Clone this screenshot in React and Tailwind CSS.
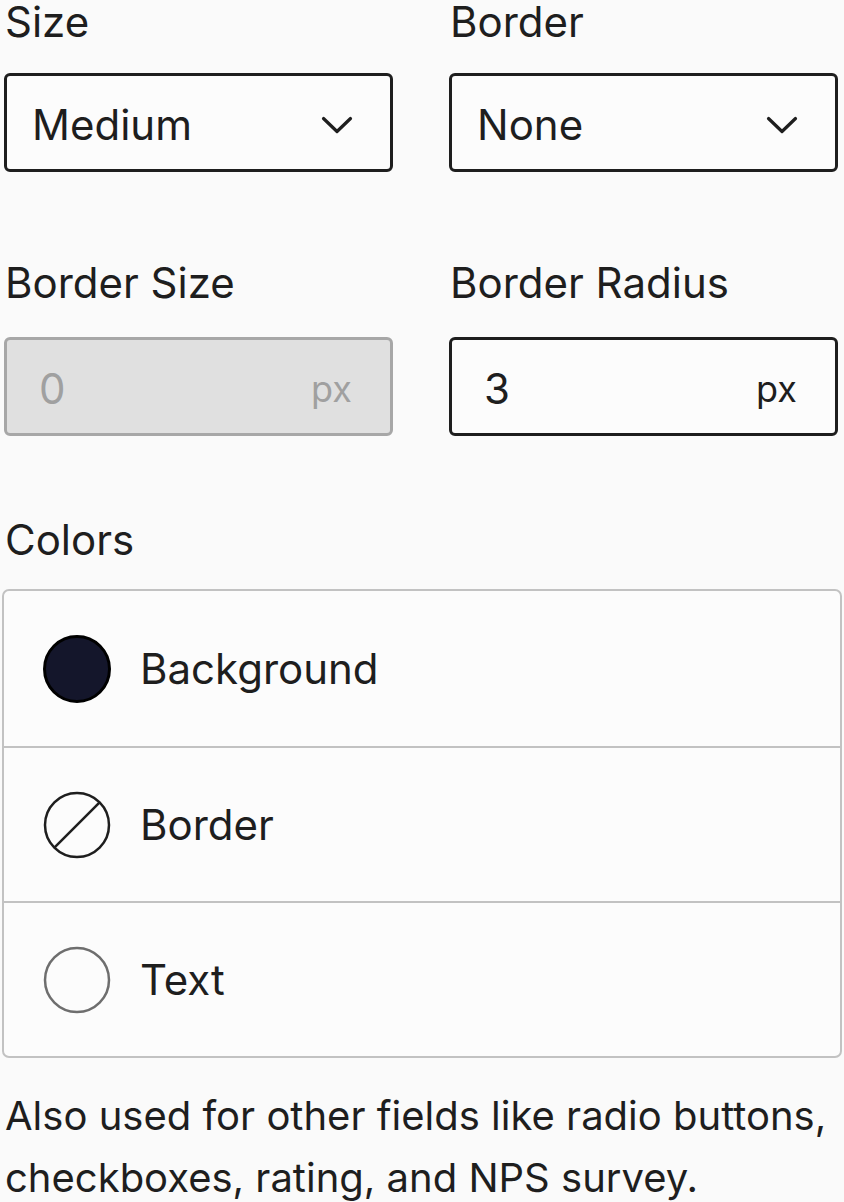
const font = { fontFamily: "Inter, 'Noto Sans', sans-serif" };

function Label({ children, className = "" }) {
  return <p className={`text-[42px] leading-[44px] text-[#1e1e1e] ${className}`}>{children}</p>;
}

function Chevron() {
  return (
    <svg width="32" height="18" viewBox="0 0 32 18" fill="none" aria-hidden="true" className="mt-[4px]">
      <path d="M2.5 2.5 16 15.5 29.5 2.5" stroke="#1e1e1e" strokeWidth="3.2" strokeLinecap="round" strokeLinejoin="round" />
    </svg>
  );
}

function SelectBox({ value }) {
  return (
    <div className="flex h-[99px] items-center justify-between rounded-[6px] border-[3px] border-[#1e1e1e] bg-[#fcfcfc] pl-[25px] pr-[37px]">
      <span className="pt-[4px] text-[42px] text-[#1e1e1e]">{value}</span>
      <Chevron />
    </div>
  );
}

function UnitInput({ value, disabled }) {
  return (
    <div
      className={
        disabled
          ? "flex h-[99px] items-center justify-between rounded-[6px] border-[3px] border-[#a7a7a7] bg-[#e0e0e0] pl-[32px] pr-[38px] text-[#a0a0a0]"
          : "flex h-[99px] items-center justify-between rounded-[6px] border-[3px] border-[#1e1e1e] bg-[#fcfcfc] pl-[32px] pr-[38px] text-[#1e1e1e]"
      }
    >
      <span className="pt-[4px] text-[42px]">{value}</span>
      <span className="pt-[4px] text-[36px]">px</span>
    </div>
  );
}

function Swatch({ kind }) {
  if (kind === "fill") {
    return (
      <svg width="68" height="68" viewBox="0 0 68 68" aria-hidden="true">
        <circle cx="34" cy="34" r="32.5" fill="#14162b" stroke="#000" strokeWidth="3" />
      </svg>
    );
  }
  if (kind === "none") {
    return (
      <svg width="68" height="68" viewBox="0 0 68 68" aria-hidden="true">
        <circle cx="34" cy="34" r="32" fill="#fcfcfc" stroke="#1e1e1e" strokeWidth="2.5" />
        <line x1="56.6" y1="11.4" x2="11.4" y2="56.6" stroke="#1e1e1e" strokeWidth="2.5" />
      </svg>
    );
  }
  return (
    <svg width="68" height="68" viewBox="0 0 68 68" aria-hidden="true">
      <circle cx="34" cy="34" r="32" fill="#fcfcfc" stroke="#6e6e6e" strokeWidth="2.5" />
    </svg>
  );
}

const colorRows = [
  { label: "Background", kind: "fill" },
  { label: "Border", kind: "none" },
  { label: "Text", kind: "empty" },
];

export default function App() {
  return (
    <div style={font} className="h-[1202px] w-[844px] overflow-hidden bg-[#fafafa]">
      <div className="grid grid-cols-2 gap-x-[56px] pl-[4px] pr-[6px]">
        <div>
          <Label className="mb-[29px] pl-[1px]">Size</Label>
          <SelectBox value="Medium" />
        </div>
        <div>
          <Label className="mb-[29px] pl-[1px]">Border</Label>
          <SelectBox value="None" />
        </div>
        <div className="mt-[89px]">
          <Label className="mb-[32px] pl-[1px]">Border Size</Label>
          <UnitInput value="0" disabled />
        </div>
        <div className="mt-[89px]">
          <Label className="mb-[32px] pl-[1px]">Border Radius</Label>
          <UnitInput value="3" />
        </div>
      </div>

      <Label className="mt-[82px] pl-[5px]">Colors</Label>

      <div className="mx-[2px] mt-[27px] overflow-hidden rounded-[7px] border-2 border-[#c2c2c2] bg-[#fcfcfc]">
        {colorRows.map((row, i) => (
          <div
            key={row.label}
            className={`flex h-[155px] items-center gap-[29px] pl-[39px] ${i > 0 ? "border-t-2 border-[#c2c2c2]" : ""}`}
          >
            <Swatch kind={row.kind} />
            <span className="text-[42px] text-[#1e1e1e]">{row.label}</span>
          </div>
        ))}
      </div>

      <p className="mt-[27px] pl-[5px] text-[40px] leading-[62px] text-[#1e1e1e]">
        Also used for other fields like radio buttons, checkboxes, rating, and NPS survey.
      </p>
    </div>
  );
}
